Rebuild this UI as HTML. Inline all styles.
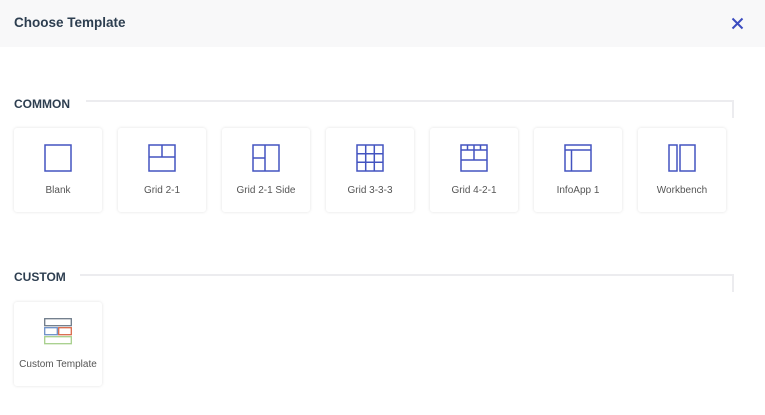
<!DOCTYPE html>
<html><head><style>
body{margin:0;width:765px;height:415px;background:#fff;font-family:"Liberation Sans",sans-serif;position:relative;overflow:hidden}
.hdr{position:absolute;left:0;top:0;width:765px;height:47px;background:#f8f8f9}
.ttl{position:absolute;left:14px;top:15px;font-size:13.5px;font-weight:bold;color:#2d3e50}
.sec{position:absolute;left:14px;font-size:12px;font-weight:bold;color:#2d3e50}
.ln{position:absolute;border-top:2px solid #ececef;border-right:2px solid #ececef;height:16px}
.card{position:absolute;width:88px;height:84px;background:#fff;border-radius:3px;box-shadow:0 0 3px rgba(0,0,0,.12)}
.card svg{position:absolute;left:30px;top:16px}
.card span{position:absolute;left:0;right:0;top:57px;text-align:center;font-size:10px;color:#555}
</style></head><body>
<div class="hdr"><div class="ttl">Choose Template</div>
<svg style="position:absolute;left:731px;top:17px" width="13" height="13"><path d="M1.5 1.5L11.5 11.5M11.5 1.5L1.5 11.5" stroke="#3b4cc0" stroke-width="2"/></svg></div>
<div class="sec" style="top:97px">COMMON</div>
<div class="ln" style="left:86px;top:100px;width:646px"></div>
<div class="sec" style="top:270px">CUSTOM</div>
<div class="ln" style="left:80px;top:274px;width:652px"></div>

<div class="card" style="left:14px;top:128px"><svg width="28" height="28"><rect x="1" y="1" width="26" height="26" fill="none" stroke="#4354c0" stroke-width="1.5"/></svg><span>Blank</span></div>
<div class="card" style="left:118px;top:128px"><svg width="28" height="28"><g fill="none" stroke="#4354c0" stroke-width="1.5"><rect x="1" y="1" width="26" height="26"/><path d="M1 13H27M14 1V13"/></g></svg><span>Grid 2-1</span></div>
<div class="card" style="left:222px;top:128px"><svg width="28" height="28"><g fill="none" stroke="#4354c0" stroke-width="1.5"><rect x="1" y="1" width="26" height="26"/><path d="M13 1V27M1 14H13"/></g></svg><span>Grid 2-1 Side</span></div>
<div class="card" style="left:326px;top:128px"><svg width="28" height="28"><g fill="none" stroke="#4354c0" stroke-width="1.5"><rect x="1" y="1" width="26" height="26"/><path d="M1 9.7H27M1 18.3H27M9.7 1V27M18.3 1V27"/></g></svg><span>Grid 3-3-3</span></div>
<div class="card" style="left:430px;top:128px"><svg width="28" height="28"><g fill="none" stroke="#4354c0" stroke-width="1.5"><rect x="1" y="1" width="26" height="26"/><path d="M1 6H27M1 16H27M7.5 1V6M14 1V16M20.5 1V6"/></g></svg><span>Grid 4-2-1</span></div>
<div class="card" style="left:534px;top:128px"><svg width="28" height="28"><g fill="none" stroke="#4354c0" stroke-width="1.5"><rect x="1" y="1" width="26" height="26"/><path d="M1 6H27M7.5 6V27"/></g></svg><span>InfoApp 1</span></div>
<div class="card" style="left:638px;top:128px"><svg width="28" height="28"><g fill="none" stroke="#4354c0" stroke-width="1.5"><rect x="1" y="1" width="8" height="26"/><rect x="12" y="1" width="15" height="26"/></g></svg><span>Workbench</span></div>

<div class="card" style="left:14px;top:302px"><svg width="28" height="28"><g fill="none" stroke-width="1.3"><rect x="0.7" y="0.7" width="26.6" height="7" stroke="#6d7a88"/><rect x="0.7" y="9.7" width="12.6" height="7" stroke="#6b8fc8"/><rect x="14.7" y="9.7" width="12.6" height="7" stroke="#d9694a"/><rect x="0.7" y="18.7" width="26.6" height="7" stroke="#a6cf8a"/></g></svg><span>Custom Template</span></div>
</body></html>
